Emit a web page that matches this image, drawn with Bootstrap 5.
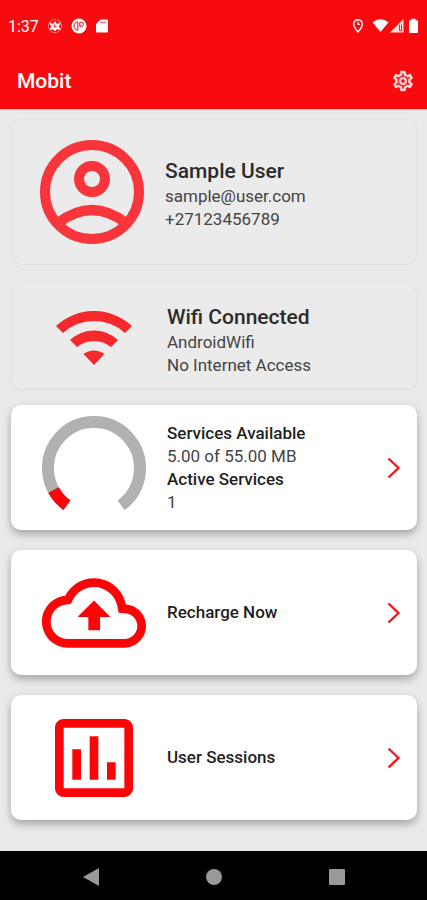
<!DOCTYPE html>
<html lang="en">
<head>
<meta charset="utf-8">
<meta name="viewport" content="width=device-width, initial-scale=1">
<title>Mobit</title>
<link href="https://cdn.jsdelivr.net/npm/bootstrap@5.3.0/dist/css/bootstrap.min.css" rel="stylesheet">
<style>
body{font-family:Roboto,"Liberation Sans",sans-serif;background:#eaeaea;color:#2b2b2b;font-size:17px;line-height:23px}
.app-top{background:#f90a0e;color:#fff;border-bottom:1px solid #f8b9b6}
.status-row{height:52px;font-size:16px}
.tool-row{height:57px;padding-left:17px}
.app-title{font-size:21px;line-height:28px;font-weight:500}
.tile{border:0;border-radius:10px;min-height:125px;color:#444}
.tile-raised{background:#fff;box-shadow:0 4px 8px rgba(0,0,0,.3)}
.tile-flat{background:#ebebeb;border:1px solid #e0e0e0}
.tile-profile{min-height:146px;border-top-color:#e5e5e5}
.tile-wifi{min-height:105px;border-top-color:transparent}
.icon-slot{width:125px;margin-left:20px;margin-right:11px}
.tile-profile .icon-slot{margin-left:17px}
.tile-wifi .icon-slot{margin-left:19px}
.heading-lg{font-size:21px;line-height:28px;font-weight:500;color:#2b2b2b}
.label-md{font-weight:500;color:#1f1f1f}
.stack{padding:9px 10px 31px 11px}
.gap-20{gap:20px}
.gap-15{gap:15px}
.bottom-bar{background:#000;height:49px}
.key{background:none;border:0;padding:0;width:123px}
</style>
<script src="https://cdn.jsdelivr.net/npm/bootstrap@5.3.0/dist/js/bootstrap.bundle.min.js"></script>
</head>
<body class="d-flex flex-column min-vh-100">
<header class="app-top">
  <div class="status-row d-flex align-items-center justify-content-between ps-2 pe-2">
    <div class="d-flex align-items-center">
      <span class="me-1">1:37</span>
      <svg class="ms-1" width="16" height="16" viewBox="0 0 16 16" fill="none" stroke="#fff" aria-hidden="true"><circle cx="8" cy="8" r="6.6" stroke-dasharray="2 1" opacity=".75"/><path d="M2.500 4.500l3.500 2 2-3 2 3 3.500-2-2 4 2 3-4-.5-1.500 2-2-2-3 .5 1.500-3z" fill="#fff" stroke-width=".6"/><path d="M6 8l4 1M8 6v4" stroke="#f90a0e" stroke-width=".7"/></svg>
      <svg class="ms-2" width="16" height="16" viewBox="0 0 16 16" aria-hidden="true"><circle cx="8" cy="8" r="7.500" fill="#fff"/><path d="M6.800 3.800v8.600C4.200 11.500 3 10 3 8s1.300-3.600 3.800-4.200zM8.800 4.300h1.700a2 2 0 0 1 0 4H8.800z" fill="none" stroke="#f90a0e" stroke-width="1"/></svg>
      <svg class="ms-2" width="14" height="16" viewBox="0 0 14 16" aria-hidden="true"><path d="M5.500 1.500H12q1 0 1 1v11q0 1-1 1H2q-1 0-1-1V6z" fill="#fff"/><path d="M5 4.500h6" stroke="#f90a0e" stroke-width="1.200" opacity=".6"/></svg>
    </div>
    <div class="d-flex align-items-center">
      <svg class="me-2" width="12" height="16" viewBox="0 0 12 16" fill="none" stroke="#fff" aria-hidden="true"><path d="M6 14C3 10.500 1.700 8.400 1.700 6a4.300 4.300 0 0 1 8.600 0c0 2.400-1.300 4.500-4.300 8z" stroke-width="1.400"/><path d="M6 3.800v2.600h2" stroke-width="1.200"/></svg>
      <svg width="17" height="16" viewBox="0 0 17 16" aria-hidden="true"><path d="M.5 4.200Q8.500-1.800 16.500 4.200L8.500 14z" fill="#fff"/></svg>
      <svg width="15" height="16" viewBox="0 0 15 16" aria-hidden="true"><path d="M14.500 1v13.500H1z" fill="#fff" opacity=".85"/><path d="M10.500 6.500v6h2v-6" fill="none" stroke="#f90a0e" stroke-width=".9"/></svg>
      <svg class="ms-1" width="11" height="16" viewBox="0 0 11 16" aria-hidden="true"><path d="M3.500.7h4v1.500h1.700q.8 0 .8.800v11q0 1-1 1H2q-1 0-1-1V3q0-.8.800-.8h1.700z" fill="#fff"/></svg>
    </div>
  </div>
  <div class="tool-row d-flex align-items-center justify-content-between pe-2">
    <h1 class="app-title mb-0">Mobit</h1>
    <button type="button" class="btn p-1 border-0 lh-1" aria-label="Settings">
      <svg width="24" height="24" viewBox="0 0 24 24" fill="#ffdcda" stroke="#ffdcda" stroke-width=".4" aria-hidden="true"><path d="M19.430 12.980c.04-.32.07-.64.07-.98 0-.34-.03-.66-.07-.98l2.110-1.650c.19-.15.24-.42.12-.64l-2-3.460c-.09-.16-.26-.25-.44-.25-.06 0-.12.01-.17.03l-2.490 1c-.52-.4-1.080-.73-1.690-.98l-.38-2.650C14.460 2.180 14.250 2 14 2h-4c-.25 0-.46.18-.49.42l-.38 2.650c-.61.25-1.170.59-1.690.98l-2.490-1c-.06-.02-.12-.03-.18-.03-.17 0-.34.09-.43.25l-2 3.460c-.13.22-.07.49.12.64l2.110 1.650c-.04.32-.07.65-.07.98 0 .33.03.66.07.98l-2.110 1.650c-.19.15-.24.42-.12.64l2 3.460c.09.16.26.25.44.25.06 0 .12-.01.17-.03l2.490-1c.52.4 1.080.73 1.690.98l.38 2.650c.03.24.24.42.49.42h4c.25 0 .46-.18.49-.42l.38-2.650c.61-.25 1.170-.59 1.690-.98l2.490 1c.06.02.12.03.18.03.17 0 .34-.09.43-.25l2-3.460c.12-.22.07-.49-.12-.64l-2.110-1.650zm-1.980-1.710c.04.31.05.52.05.73 0 .21-.02.43-.05.73l-.14 1.130.89.7 1.080.84-.7 1.210-1.270-.51-1.040-.42-.9.68c-.43.32-.84.56-1.250.73l-1.060.43-.16 1.130-.2 1.350h-1.400l-.19-1.350-.16-1.130-1.060-.43c-.43-.18-.83-.41-1.230-.71l-.91-.7-1.060.43-1.270.51-.7-1.210 1.080-.84.89-.7-.14-1.130c-.03-.31-.05-.54-.05-.74s.02-.43.05-.73l.14-1.130-.89-.7-1.080-.84.7-1.210 1.270.51 1.040.42.9-.68c.43-.32.84-.56 1.250-.73l1.060-.43.16-1.130.2-1.350h1.390l.19 1.350.16 1.130 1.060.43c.43.18.83.41 1.230.71l.91.7 1.060-.43 1.270-.51.7 1.210-1.070.85-.89.7.14 1.130zM12 8c-2.210 0-4 1.790-4 4s1.790 4 4 4 4-1.790 4-4-1.790-4-4-4zm0 6c-1.100 0-2-.9-2-2s.9-2 2-2 2 .9 2 2-.9 2-2 2z"/></svg>
    </button>
  </div>
</header>

<main class="stack flex-grow-1 d-flex flex-column gap-15">
  <div class="d-flex flex-column gap-20">
    <section class="tile tile-flat tile-profile d-flex align-items-center">
      <div class="icon-slot text-center flex-shrink-0">
        <svg width="104" height="104" viewBox="0 0 104 104" fill="none" stroke="#f8353a" stroke-width="10" aria-hidden="true"><circle cx="52" cy="52" r="47"/><circle cx="52" cy="39" r="13"/><path d="M18 83Q52 57 86 83"/></svg>
      </div>
      <div class="pt-1">
        <h2 class="heading-lg mb-0">Sample User</h2>
        <div>sample@user.com</div>
        <div>+27123456789</div>
      </div>
    </section>
    <section class="tile tile-flat tile-wifi d-flex align-items-center">
      <div class="icon-slot text-center flex-shrink-0">
        <svg width="76" height="54" viewBox="0 0 76 54" fill="#f5282c" aria-hidden="true"><path d="M0 15A55.600 55.600 0 0 1 76 15L69 22A46 46 0 0 0 7 22zM14 29A35 35 0 0 1 62 29L55 36A27 27 0 0 0 21 36zM27.500 43A17.500 17.500 0 0 1 48.500 43L38 54z"/></svg>
      </div>
      <div class="pt-1">
        <h2 class="heading-lg mb-0">Wifi Connected</h2>
        <div>AndroidWifi</div>
        <div>No Internet Access</div>
      </div>
    </section>
  </div>
  <nav class="d-flex flex-column gap-20" aria-label="Services">
    <a href="#services" class="tile tile-raised d-flex align-items-center text-decoration-none pe-3">
      <span class="icon-slot text-center flex-shrink-0">
        <svg width="104" height="104" viewBox="0 0 104 104" fill="none" stroke-width="12" aria-hidden="true"><path d="M24.960 89.220A46 46 0 1 1 79.040 89.220" stroke="#b1b1b1"/><path d="M24.960 89.220A46 46 0 0 1 11.600 74" stroke="#fb0509"/></svg>
      </span>
      <span class="flex-grow-1 d-flex flex-column">
        <span class="label-md">Services Available</span>
        <span>5.00 of 55.00 MB</span>
        <span class="label-md">Active Services</span>
        <span>1</span>
      </span>
      <svg class="flex-shrink-0" width="14" height="22" viewBox="0 0 14 22" fill="none" stroke="#fa161b" stroke-width="2.400" aria-hidden="true"><path d="M1.500 1.500L11.500 11L1.500 20.500"/></svg>
    </a>
    <a href="#recharge" class="tile tile-raised d-flex align-items-center text-decoration-none pe-3">
      <span class="icon-slot text-center flex-shrink-0">
        <svg width="104" height="104" viewBox="0 0 24 24" fill="#fb0509" aria-hidden="true"><path d="M19.350 10.040C18.670 6.590 15.640 4 12 4 9.110 4 6.600 5.640 5.350 8.040 2.340 8.360 0 10.910 0 14c0 3.310 2.690 6 6 6h13c2.760 0 5-2.240 5-5 0-2.640-2.050-4.780-4.650-4.960zM19 18H6c-2.210 0-4-1.790-4-4 0-2.050 1.530-3.760 3.560-3.970l1.070-.11.5-.95C8.080 7.140 9.940 6 12 6c2.620 0 4.880 1.860 5.390 4.430l.3 1.500 1.530.11c1.560.1 2.780 1.410 2.780 2.960 0 1.650-1.350 3-3 3z"/><path d="M8.200 12.900H10.700V16H13.400V12.900H15.800L12 9.100z"/></svg>
      </span>
      <span class="label-md flex-grow-1">Recharge Now</span>
      <svg class="flex-shrink-0" width="14" height="22" viewBox="0 0 14 22" fill="none" stroke="#fa161b" stroke-width="2.400" aria-hidden="true"><path d="M1.500 1.500L11.500 11L1.500 20.500"/></svg>
    </a>
    <a href="#sessions" class="tile tile-raised d-flex align-items-center text-decoration-none pe-3">
      <span class="icon-slot text-center flex-shrink-0">
        <svg width="104" height="104" viewBox="0 0 24 24" fill="#fb0509" aria-hidden="true"><path d="M9 17H7v-7h2v7zm4 0h-2V7h2v10zm4 0h-2v-4h2v4zm2 2H5V5h14v14zm0-16H5c-1.100 0-2 .9-2 2v14c0 1.100.9 2 2 2h14c1.100 0 2-.9 2-2V5c0-1.100-.9-2-2-2z"/></svg>
      </span>
      <span class="label-md flex-grow-1">User Sessions</span>
      <svg class="flex-shrink-0" width="14" height="22" viewBox="0 0 14 22" fill="none" stroke="#fa161b" stroke-width="2.400" aria-hidden="true"><path d="M1.500 1.500L11.500 11L1.500 20.500"/></svg>
    </a>
  </nav>
</main>

<footer class="bottom-bar d-flex align-items-center justify-content-center">
  <button type="button" class="key" aria-label="Back"><svg width="16" height="18" viewBox="0 0 16 18" fill="#999" aria-hidden="true"><path d="M16 0v18L0 9z"/></svg></button>
  <button type="button" class="key" aria-label="Home"><svg width="16" height="16" viewBox="0 0 16 16" fill="#999" aria-hidden="true"><circle cx="8" cy="8" r="8"/></svg></button>
  <button type="button" class="key" aria-label="Recent apps"><svg width="16" height="16" viewBox="0 0 16 16" fill="#999" aria-hidden="true"><rect width="16" height="16" rx="1"/></svg></button>
</footer>
</body>
</html>
